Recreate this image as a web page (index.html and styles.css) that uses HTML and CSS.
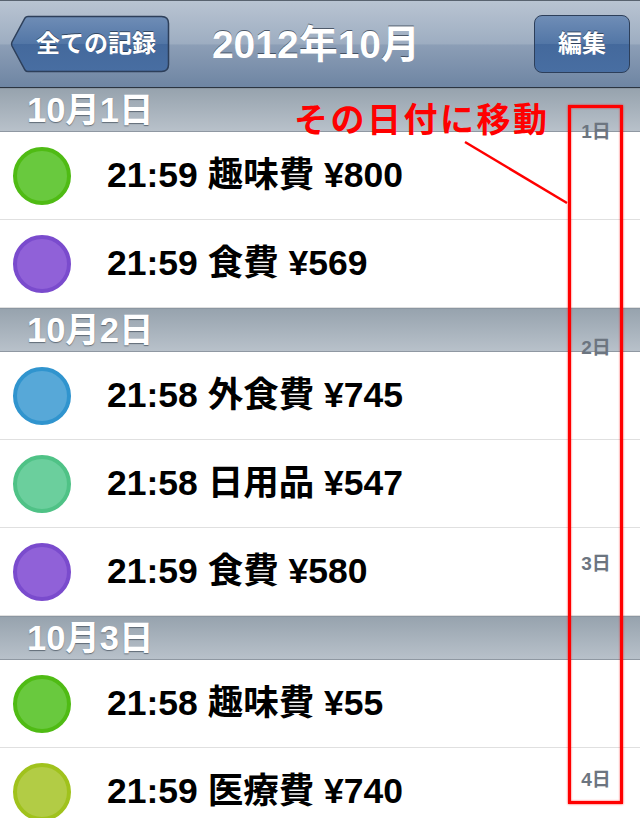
FILE: index.html
```html
<!DOCTYPE html>
<html lang="ja">
<head>
<meta charset="utf-8">
<title>2012年10月</title>
<link rel="stylesheet" href="styles.css">
</head>
<body>
<div class="screen">
  <header class="nav">
    <button class="back-btn">
      <svg class="back-shape" width="160" height="58" viewBox="0 0 160 58">
        <defs>
          <linearGradient id="bg" x1="0" y1="0" x2="0" y2="1">
            <stop offset="0" stop-color="#6f8db6"/>
            <stop offset="0.5" stop-color="#5276a6"/>
            <stop offset="0.5" stop-color="#44699c"/>
            <stop offset="1" stop-color="#486ea2"/>
          </linearGradient>
        </defs>
        <path d="M18 1.5 H151.5 Q158.5 1.5 158.5 8.5 V49.5 Q158.5 56.5 151.5 56.5 H18 Q16 56.5 15 55 L2 31 Q1 29 2 27 L15 3 Q16 1.5 18 1.5 Z" fill="url(#bg)" stroke="#2d3f5a" stroke-width="1.5"/>
      </svg>
      <span class="btn-label back-label">全ての記録</span>
    </button>
    <h1 class="title">2012年10月</h1>
    <button class="edit-btn"><span class="btn-label">編集</span></button>
  </header>

  <main class="list">
    <div class="section-header">10月1日</div>
    <div class="row"><span class="dot green"></span><span class="entry">21:59 趣味費 ¥800</span></div>
    <div class="row"><span class="dot purple"></span><span class="entry">21:59 食費 ¥569</span></div>

    <div class="section-header">10月2日</div>
    <div class="row"><span class="dot blue"></span><span class="entry">21:58 外食費 ¥745</span></div>
    <div class="row"><span class="dot teal"></span><span class="entry">21:58 日用品 ¥547</span></div>
    <div class="row"><span class="dot purple"></span><span class="entry">21:59 食費 ¥580</span></div>

    <div class="section-header">10月3日</div>
    <div class="row"><span class="dot green"></span><span class="entry">21:58 趣味費 ¥55</span></div>
    <div class="row"><span class="dot olive"></span><span class="entry">21:59 医療費 ¥740</span></div>
  </main>

  <nav class="index">
    <span>1日</span>
    <span>2日</span>
    <span>3日</span>
    <span>4日</span>
  </nav>

  <div class="annot">
    <div class="annot-text">その日付に移動</div>
    <svg class="annot-line" width="640" height="818" viewBox="0 0 640 818">
      <line x1="465" y1="142" x2="567" y2="203" stroke="#ff0000" stroke-width="2.5"/>
    </svg>
    <div class="annot-box"></div>
  </div>
</div>
</body>
</html>
```

FILE: styles.css
```css
html, body {
  margin: 0;
  padding: 0;
  background: #ffffff;
}

.screen {
  position: relative;
  width: 640px;
  height: 818px;
  overflow: hidden;
  font-family: "Liberation Sans", "Noto Sans CJK JP", sans-serif;
  font-weight: bold;
}

/* Navigation bar */
.nav {
  display: grid;
  grid-template-columns: 1fr auto 1fr;
  align-items: center;
  height: 86px;
  padding: 0 10px 0 10px;
  border-top: 1px solid #59636f;
  border-bottom: 1px solid #2b3440;
  background: linear-gradient(to bottom, #b9c4d2 0%, #9dadc1 50%, #8c9eb6 51%, #6e85a3 100%);
}

.back-btn {
  justify-self: start;
  position: relative;
  width: 160px;
  height: 58px;
  padding: 0 0 0 12px;
  margin: 0;
  border: 0;
  background: none;
  display: flex;
  align-items: center;
  justify-content: center;
  font: inherit;
}

.back-shape {
  position: absolute;
  left: 0;
  top: 0;
}

.btn-label {
  position: relative;
  color: #ffffff;
  font-size: 24px;
  font-weight: bold;
  text-shadow: 0 -1px 0 rgba(0, 0, 0, 0.45);
  line-height: 1;
}

.title {
  margin: 0;
  color: #ffffff;
  font-size: 39px;
  font-weight: bold;
  line-height: 1;
  text-shadow: 0 -1px 0 rgba(40, 50, 65, 0.7);
  transform: translateX(-4px);
}

.edit-btn {
  justify-self: end;
  width: 96px;
  height: 58px;
  margin: 0;
  padding: 0;
  border: 1.5px solid #2d3f5a;
  border-radius: 8px;
  background: linear-gradient(to bottom, #6f8db6 0%, #5276a6 50%, #44699c 50%, #486ea2 100%);
  display: flex;
  align-items: center;
  justify-content: center;
  font: inherit;
}

/* List */
.list {
  display: flex;
  flex-direction: column;
}

.section-header {
  height: 42px;
  box-sizing: content-box;
  border-top: 1px solid #8b96a1;
  border-bottom: 1px solid #8f98a2;
  background: linear-gradient(to bottom, #97a3ae 0%, #b8c1ca 100%);
  color: #ffffff;
  font-size: 34.5px;
  line-height: 42px;
  padding-left: 27px;
  text-shadow: 0 1px 1px rgba(70, 80, 92, 0.75);
}

.row {
  height: 87px;
  border-bottom: 1px solid #e0e0e0;
  display: flex;
  align-items: center;
  padding-left: 13px;
  background: #ffffff;
}

.row:last-child {
  border-bottom: 0;
}

.dot {
  width: 58px;
  height: 58px;
  box-sizing: border-box;
  border-radius: 50%;
  border: 4px solid;
  flex: none;
}

.dot.green  { background: #69c93e; border-color: #4fbb14; }
.dot.purple { background: #9061d8; border-color: #7a4bcd; }
.dot.blue   { background: #57a8d8; border-color: #3094ce; }
.dot.teal   { background: #6bcf9d; border-color: #4fc286; }
.dot.olive  { background: #b2cc45; border-color: #a0c21c; }

.entry {
  margin-left: 36px;
  font-size: 35.5px;
  color: #000000;
  line-height: 1;
}

/* Section index (overlay on the right) */
.index {
  position: absolute;
  top: 120px;
  right: 20px;
  width: 48px;
  height: 672px;
  display: flex;
  flex-direction: column;
  justify-content: space-between;
  align-items: center;
  color: #6c7580;
  font-size: 19px;
  line-height: 24px;
}

/* Red annotation overlay */
.annot {
  position: absolute;
  inset: 0;
  pointer-events: none;
}

.annot-text {
  position: absolute;
  left: 294px;
  top: 101px;
  color: #ff0000;
  font-size: 34px;
  letter-spacing: 2.5px;
  line-height: 38px;
  white-space: nowrap;
}

.annot-line {
  position: absolute;
  left: 0;
  top: 0;
}

.annot-box {
  position: absolute;
  left: 568px;
  top: 105px;
  width: 49px;
  height: 693px;
  border: 3px solid #ff0000;
  box-shadow: 0 0 2px rgba(255, 0, 0, 0.8), inset 0 0 2px rgba(255, 0, 0, 0.8);
}
```
